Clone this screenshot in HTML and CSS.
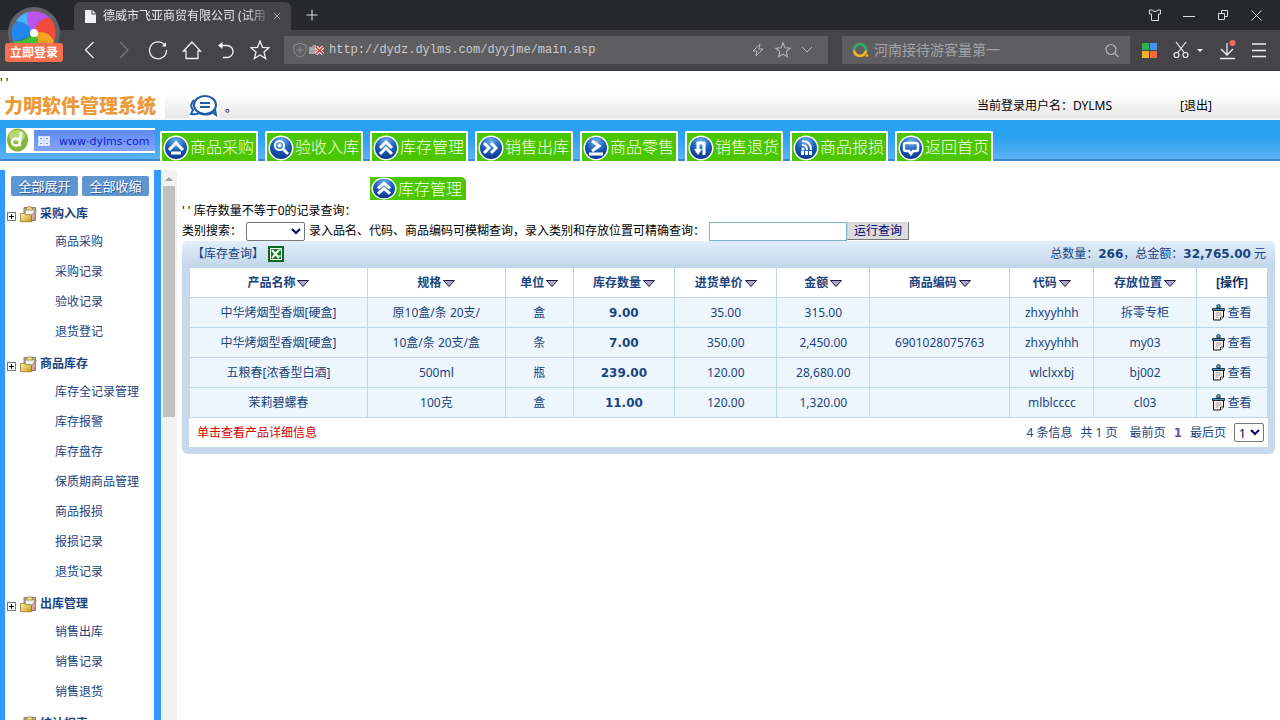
FILE: index.html
```html
<!DOCTYPE html>
<html lang="zh-CN">
<head>
<meta charset="utf-8">
<title>德威市飞亚商贸有限公司</title>
<link rel="stylesheet" href="styles.css">
</head>
<body>
<svg class="defs" width="0" height="0" aria-hidden="true">
  <defs>
    <radialGradient id="ball" cx="50%" cy="20%" r="85%">
      <stop offset="0" stop-color="#6fb6ee"/><stop offset=".5" stop-color="#1d5fb8"/><stop offset="1" stop-color="#0c2f86"/>
    </radialGradient>
    <linearGradient id="folderFill" x1="0" y1="0" x2="1" y2="1">
      <stop offset="0" stop-color="#fff6b8"/><stop offset="1" stop-color="#c99a12"/>
    </linearGradient>
    <linearGradient id="ring" x1="0" y1="0" x2="0" y2="1">
      <stop offset=".5" stop-color="#2fae72"/><stop offset=".6" stop-color="#f2b51f"/>
    </linearGradient>
    <symbol id="disc" viewBox="0 0 26 26">
      <circle cx="13" cy="13" r="12.5" fill="#fff"/><circle cx="13" cy="13" r="11" fill="url(#ball)"/>
    </symbol>
    <symbol id="folder" viewBox="0 0 17 17">
      <path d="M4 1.500h11.500v13H4z" fill="#b9a98a" stroke="#8d8172"/><path d="M6 4h8l-2 9H6z" fill="#f3eff5"/>
      <path d="M7 1.500q2.500-2 5 0l1 2.500H6z" fill="#eedb86" stroke="#8e7a3b" stroke-width=".7"/>
      <path d="M11 10l5-6-1 8-3 3z" fill="#d9a8a6" stroke="#8b6f6c" stroke-width=".6"/>
      <path d="M.5 7.500h4l1 1.200h6v7H.5z" fill="url(#folderFill)" stroke="#8f7523" stroke-width=".8"/>
    </symbol>
    <symbol id="sort" viewBox="0 0 12 7"><path d="M.5.500h11L6 6.500z" fill="#aaa4d4" stroke="#221833"/></symbol>
    <symbol id="clip" viewBox="0 0 13 17">
      <path d="M1.500 6v10h7l3-3V6z" fill="#fdf4ee" stroke="#111"/><path d="M3.500 9h6M3.500 11h6M3.500 13h3" stroke="#777" stroke-width=".7"/>
      <path d="M.5 4.500h12v2H.5z" fill="#3f9bdc" stroke="#111" stroke-width=".8"/><path d="M5 4q-1-3.500 1.500-3.500T8 4z" fill="#55b2e8" stroke="#111" stroke-width=".8"/>
      <path d="M8.500 16v-3h3" fill="#fff" stroke="#111" stroke-width=".8"/>
    </symbol>
    <symbol id="up2" viewBox="0 0 26 26"><use href="#disc"/><path d="M7 13l6-6 6 6M7 19l6-6 6 6" fill="none" stroke="#fff" stroke-width="3"/></symbol>
  </defs>
</svg>

<div class="window">
  <header class="chrome">
    <div class="tabs">
      <div class="tab">
        <svg width="11" height="13" viewBox="0 0 11 13"><path d="M0 0h6.500v4.500H11V13H0z" fill="#f1f1f5"/><path d="M7.500 0L11 3.500H7.500z" fill="#f1f1f5"/></svg>
        <span class="tab-title">德威市飞亚商贸有限公司 (试用</span>
        <button class="plain" aria-label="关闭标签"><svg width="8" height="8" viewBox="0 0 8 8"><path d="M1 1l6 6M7 1L1 7" stroke="#a5a5a9"/></svg></button>
      </div>
      <button class="plain newtab" aria-label="新标签"><svg width="12" height="12" viewBox="0 0 12 12"><path d="M6 .5v11M.5 6h11" stroke="#dcdce0"/></svg></button>
      <div class="winbtns">
        <button class="plain" aria-label="皮肤"><svg width="14" height="14" viewBox="0 0 14 14" fill="none" stroke="#dcdce0"><path d="M1.500 2h3q0 1.500 2.500 1.500T9.500 2h3v4h-2v6.500h-7V6h-2z"/></svg></button>
        <button class="plain" aria-label="最小化"><svg width="14" height="14" viewBox="0 0 14 14"><path d="M1 8.500h12" stroke="#dcdce0"/></svg></button>
        <button class="plain" aria-label="还原"><svg width="14" height="14" viewBox="0 0 14 14" fill="none" stroke="#dcdce0"><path d="M2.500 5.500h6v6h-6zM5.500 5.500v-3h6v6h-3"/></svg></button>
        <button class="plain" aria-label="关闭"><svg width="14" height="14" viewBox="0 0 14 14"><path d="M1.500 2.500l10 10M11.500 2.500l-10 10" stroke="#dcdce0"/></svg></button>
      </div>
    </div>
    <div class="toolbar">
      <div class="navbtns">
        <button class="plain" aria-label="后退"><svg width="20" height="20" viewBox="0 0 20 20" fill="none" stroke="#efeff2" stroke-width="1.300"><path d="M13.500 2L5.500 10l8 8"/></svg></button>
        <button class="plain" aria-label="前进"><svg width="20" height="20" viewBox="0 0 20 20" fill="none" stroke="#77777b" stroke-width="1.300"><path d="M6 2l8 8-8 8"/></svg></button>
        <button class="plain" aria-label="刷新"><svg width="20" height="20" viewBox="0 0 20 20" fill="none" stroke="#efeff2" stroke-width="1.300"><path d="M17 5.500A8.500 8.500 0 1 0 18.500 10"/><path d="M18 2v4.500h-4z" fill="#efeff2" stroke="none"/></svg></button>
        <button class="plain" aria-label="主页"><svg width="20" height="20" viewBox="0 0 20 20" fill="none" stroke="#efeff2" stroke-width="1.300"><path d="M1.500 11l8.500-9 8.500 9H16v7.500H4V11z"/></svg></button>
        <button class="plain" aria-label="撤销"><svg width="20" height="20" viewBox="0 0 20 20" fill="none" stroke="#efeff2" stroke-width="1.300"><path d="M3 5.500h8a6 6 0 0 1 0 12H7"/><path d="M6.500 2v7L2 5.500z" fill="#efeff2" stroke="none"/></svg></button>
        <button class="plain" aria-label="收藏"><svg width="20" height="20" viewBox="0 0 20 20" fill="none" stroke="#efeff2" stroke-width="1.300"><path d="M10 1l2.500 6.300 6.500.5-5 4.200 1.600 6.500L10 15l-5.600 3.500L6 12 1 7.800l6.500-.5z"/></svg></button>
      </div>
      <div class="address">
        <svg width="14" height="16" viewBox="0 0 14 16" fill="none" stroke="#8d8d90"><path d="M7 1q3 2 6 2v5q0 5-6 7-6-2-6-7V3q3 0 6-2zM7 4.500v7M3.500 8h7"/></svg>
        <svg class="noflash" width="18" height="12" viewBox="0 0 18 12"><path d="M0 3h3l1-2h3v9H0z" fill="#a7a7aa"/><path d="M7 3l7 7M14 3l-7 7" stroke="#fff" stroke-width="3.500"/><path d="M7 3l7 7M14 3l-7 7" stroke="#d33b33" stroke-width="1.700"/></svg>
        <input class="url" aria-label="网址" value="http://dydz.dylms.com/dyyjme/main.asp">
        <svg width="14" height="16" viewBox="0 0 14 16" fill="none" stroke="#b5b5b8"><path d="M9 2L2 9h4l-1 5 7-7H8z"/></svg>
        <svg width="16" height="16" viewBox="0 0 20 20" fill="none" stroke="#b5b5b8" stroke-width="1.300"><path d="M10 1l2.500 6.300 6.500.5-5 4.200 1.600 6.500L10 15l-5.600 3.500L6 12 1 7.800l6.500-.5z"/></svg>
        <svg width="12" height="8" viewBox="0 0 12 8" fill="none" stroke="#b5b5b8"><path d="M1 1l5 5 5-5"/></svg>
      </div>
      <div class="search">
        <svg width="18" height="16" viewBox="0 0 18 16"><circle cx="8" cy="8" r="6" fill="none" stroke="url(#ring)" stroke-width="2.600"/><circle cx="15" cy="13.500" r="1.500" fill="#f2a41f"/></svg>
        <input aria-label="搜索" value="河南接待游客量第一">
        <svg width="14" height="15" viewBox="0 0 14 15" fill="none" stroke="#b5b5b8" stroke-width="1.200"><circle cx="6" cy="6.500" r="5"/><path d="M9.500 10l4 4"/></svg>
      </div>
      <div class="tools">
        <button class="plain" aria-label="应用"><svg width="15" height="15" viewBox="0 0 15 15"><path d="M0 0h7v7H0z" fill="#2fb24c"/><path d="M8 0h7v7H8z" fill="#3f95f0"/><path d="M0 8h7v7H0z" fill="#f7b32b"/><path d="M8 8h7v7H8z" fill="#f26a3d"/></svg></button>
        <button class="plain" aria-label="截图"><svg width="30" height="18" viewBox="0 0 30 18" fill="none" stroke="#efeff2" stroke-width="1.200"><path d="M3 1l8.500 11M13 1L4.500 12"/><circle cx="3.500" cy="14" r="2.500"/><circle cx="12.500" cy="14" r="2.500"/><path d="M24 8h6l-3 3z" fill="#fff" stroke="none"/></svg></button>
        <button class="plain" aria-label="下载"><svg width="17" height="20" viewBox="0 0 17 20" fill="none" stroke="#efeff2" stroke-width="1.300"><path d="M8 3v12M2 9l6 6 6-6M1 18.500h15"/><circle cx="13.500" cy="3" r="3" fill="#ee6a60" stroke="none"/></svg></button>
        <button class="plain" aria-label="菜单"><svg width="14" height="16" viewBox="0 0 14 16"><path d="M0 2h14M0 8.500h14M0 14.500h14" stroke="#efeff2" stroke-width="1.300"/></svg></button>
      </div>
    </div>
    <button class="login">
      <svg width="52" height="52" viewBox="-26 -26 52 52"><circle r="26" fill="#626266"/>
        <path d="M0 0Q-4-10-18-12A22 22 0 0 0-21 8Q-10 8 0 0z" fill="#2386f0"/><path d="M0 0Q-4-10-18-12A22 22 0 0 1-6-21Q-8-8 0 0z" fill="#45b6f5"/><path d="M0 0Q-10-10-6-21A22 22 0 0 1 16-15Q4-14 0 0z" fill="#b955ea"/><path d="M0 0Q3-15 16-15A22 22 0 0 1 20 8Q14-4 0 0z" fill="#f24a3c"/><path d="M0 0Q14-4 20 8A22 22 0 0 1 2 22Q8 10 0 0z" fill="#f9a21f"/><path d="M0 0Q8 10 2 22A22 22 0 0 1-21 8Q-10 10 0 0z" fill="#3fc23a"/>
        <circle r="4" fill="#fff"/></svg>
      <span>立即登录</span>
    </button>
  </header>

  <div class="page">
    <div class="stray">' '</div>
    <div class="brand">
      <h1>力明软件管理系统</h1>
      <svg class="chat" width="30" height="24" viewBox="0 0 30 24" fill="none" stroke="#1c5aa6" stroke-width="2"><ellipse cx="16" cy="11" rx="11" ry="9" fill="#fff"/><path d="M5 6Q0 11 4 16l-2 4q5 1 8-1 7 3 13 0"/><path d="M23 18l4 3-1-6"/><path d="M11 9h10M11 13h10"/></svg>
      <span class="dot">。</span>
      <span class="user">当前登录用户名：DYLMS</span>
      <a href="#">[退出]</a>
    </div>
    <nav class="band">
      <a class="site" href="#">
        <svg width="28" height="25" viewBox="0 0 28 25"><path d="M0 0h28v25H0z" fill="#fff"/><ellipse cx="11.500" cy="12" rx="10.500" ry="11.500" fill="#87b63d"/><ellipse cx="11" cy="8" rx="8" ry="6" fill="#b5d77a"/><ellipse cx="10" cy="14" rx="4" ry="3.500" fill="none" stroke="#fff" stroke-width="2.500"/><path d="M15 4l-1.500 14" stroke="#fff" stroke-width="2.500"/></svg>
        <span class="site-url"><svg width="12" height="10" viewBox="0 0 12 10" fill="none" stroke="#fff" stroke-width="1.500"><path d="M1 1h4v3H1zM7 1h4v3H7zM1 6h4v3H1zM7 6h4v3H7z"/></svg><span>www·dylms·com</span></span>
      </a>
      <a class="pill" href="#"><svg width="26" height="26" viewBox="0 0 26 26"><use href="#disc"/><path d="M6 15l7-7 7 7M8 18h10" fill="none" stroke="#fff" stroke-width="3"/></svg>商品采购</a>
      <a class="pill" href="#"><svg width="26" height="26" viewBox="0 0 26 26"><use href="#disc"/><g fill="none" stroke="#fff" stroke-width="2"><circle cx="11.500" cy="10.500" r="4.500"/><path d="M9.500 10.500h4M11.500 8.500v4"/><path d="M15 14l5 5" stroke-width="3"/></g></svg>验收入库</a>
      <a class="pill" href="#"><svg width="26" height="26"><use href="#up2"/></svg>库存管理</a>
      <a class="pill" href="#"><svg width="26" height="26" viewBox="0 0 26 26"><use href="#disc"/><path d="M6 8l5 5-5 5M13 8l5 5-5 5" fill="none" stroke="#fff" stroke-width="3"/></svg>销售出库</a>
      <a class="pill" href="#"><svg width="26" height="26" viewBox="0 0 26 26"><use href="#disc"/><path d="M9 6l7 5-7 5M6 19h14" fill="none" stroke="#fff" stroke-width="3"/></svg>商品零售</a>
      <a class="pill" href="#"><svg width="26" height="26" viewBox="0 0 26 26"><use href="#disc"/><path d="M10 17V8h6v12" fill="none" stroke="#fff" stroke-width="3"/><path d="M6 14h8l-4 6z" fill="#fff"/></svg>销售退货</a>
      <a class="pill" href="#"><svg width="26" height="26" viewBox="0 0 26 26"><use href="#disc"/><g fill="none" stroke="#fff" stroke-width="2"><path d="M9 6q9 0 9 9M9 10q5 0 5 5"/><path d="M8 18h11" stroke-width="4" stroke-dasharray="3 1"/></g><circle cx="10" cy="14" r="1.500" fill="#fff"/></svg>商品报损</a>
      <a class="pill" href="#"><svg width="26" height="26" viewBox="0 0 26 26"><use href="#disc"/><path d="M8 8h10q2 0 2 2v4q0 2-2 2h-3l-2 3-2-3H8q-2 0-2-2v-4q0-2 2-2z" fill="none" stroke="#fff" stroke-width="2.500"/></svg>返回首页</a>
    </nav>

    <div class="body">
      <aside class="side">
        <div class="side-btns"><button>全部展开</button><button>全部收缩</button></div>
        <section>
          <h2><i class="plus"></i><svg width="17" height="17"><use href="#folder"/></svg>采购入库</h2>
          <a href="#">商品采购</a><a href="#">采购记录</a><a href="#">验收记录</a><a href="#">退货登记</a>
        </section>
        <section>
          <h2><i class="plus"></i><svg width="17" height="17"><use href="#folder"/></svg>商品库存</h2>
          <a href="#">库存全记录管理</a><a href="#">库存报警</a><a href="#">库存盘存</a><a href="#">保质期商品管理</a><a href="#">商品报损</a><a href="#">报损记录</a><a href="#">退货记录</a>
        </section>
        <section>
          <h2><i class="plus"></i><svg width="17" height="17"><use href="#folder"/></svg>出库管理</h2>
          <a href="#">销售出库</a><a href="#">销售记录</a><a href="#">销售退货</a>
        </section>
        <section>
          <h2><i class="plus"></i><svg width="17" height="17"><use href="#folder"/></svg>统计报表</h2>
        </section>
      </aside>
      <div class="scroll"><svg width="8" height="4" viewBox="0 0 8 4"><path d="M0 4l4-4 4 4z" fill="#a0a0a0"/></svg><div class="thumb"></div></div>

      <main>
        <div class="current"><svg width="26" height="23" viewBox="0 0 26 26" preserveAspectRatio="none"><use href="#up2"/></svg>库存管理</div>
        <p class="note">' ' 库存数量不等于0的记录查询：</p>
        <form class="query">
          <label for="cat">类别搜索：</label>
          <select id="cat"><option></option></select>
          <label for="kw">录入品名、代码、商品编码可模糊查询，录入类别和存放位置可精确查询：</label>
          <input id="kw" type="text"><button type="button">运行查询</button>
        </form>
        <div class="panel">
          <div class="panel-head">
            <span>【库存查询】</span>
            <svg width="16" height="16" viewBox="0 0 16 16"><path d="M0 0h16v16H0z" fill="#0b6b1c"/><path d="M2 2h12v12H2z" fill="#fff"/><path d="M3 3h10v10H3z" fill="#0e7a22"/><path d="M4 4l7 8M11 4l-7 8" stroke="#fff" stroke-width="2"/><path d="M9 10h4M11 4l2 0" stroke="#fff"/></svg>
            <span class="sum">总数量：<b>266</b>，总金额：<b>32,765.00</b> 元</span>
          </div>
          <table>
            <colgroup><col class="name"><col class="spec"><col class="unit"><col class="count"><col class="price"><col class="amount"><col class="barcode"><col class="code"><col class="place"><col class="action"></colgroup>
            <thead><tr>
              <th>产品名称<svg width="12" height="7"><use href="#sort"/></svg></th><th>规格<svg width="12" height="7"><use href="#sort"/></svg></th><th>单位<svg width="12" height="7"><use href="#sort"/></svg></th><th>库存数量<svg width="12" height="7"><use href="#sort"/></svg></th><th>进货单价<svg width="12" height="7"><use href="#sort"/></svg></th><th>金额<svg width="12" height="7"><use href="#sort"/></svg></th><th>商品编码<svg width="12" height="7"><use href="#sort"/></svg></th><th>代码<svg width="12" height="7"><use href="#sort"/></svg></th><th>存放位置<svg width="12" height="7"><use href="#sort"/></svg></th><th class="op">[操作]</th>
            </tr></thead>
            <tbody>
              <tr><td>中华烤烟型香烟[硬盒]</td><td>原10盒/条 20支/</td><td>盒</td><td><b>9.00</b></td><td>35.00</td><td>315.00</td><td></td><td>zhxyyhhh</td><td>拆零专柜</td><td><a href="#"><svg width="13" height="17"><use href="#clip"/></svg>查看</a></td></tr>
              <tr><td>中华烤烟型香烟[硬盒]</td><td>10盒/条 20支/盒</td><td>条</td><td><b>7.00</b></td><td>350.00</td><td>2,450.00</td><td>6901028075763</td><td>zhxyyhhh</td><td>my03</td><td><a href="#"><svg width="13" height="17"><use href="#clip"/></svg>查看</a></td></tr>
              <tr><td>五粮春[浓香型白酒]</td><td>500ml</td><td>瓶</td><td><b>239.00</b></td><td>120.00</td><td>28,680.00</td><td></td><td>wlclxxbj</td><td>bj002</td><td><a href="#"><svg width="13" height="17"><use href="#clip"/></svg>查看</a></td></tr>
              <tr><td>茉莉碧螺春</td><td>100克</td><td>盒</td><td><b>11.00</b></td><td>120.00</td><td>1,320.00</td><td></td><td>mlblcccc</td><td>cl03</td><td><a href="#"><svg width="13" height="17"><use href="#clip"/></svg>查看</a></td></tr>
            </tbody>
          </table>
          <div class="panel-foot">
            <span class="hint">单击查看产品详细信息</span>
            <span>4 条信息</span><span>共 1 页</span>
            <a class="first" href="#">最前页</a><b>1</b><a href="#">最后页</a>
            <select aria-label="页码"><option>1</option></select>
          </div>
        </div>
      </main>
    </div>
  </div>
</div>
</body>
</html>
```

FILE: styles.css
```css
* { box-sizing: border-box; }
body {
  margin: 0;
  font: 12px/20px "Noto Sans", "Noto Sans CJK SC", sans-serif;
  color: #000;
  background: #fff;
}
button, input, select { font: inherit; }
a { color: inherit; text-decoration: none; }
h1, h2, p { margin: 0; }
svg { flex: none; display: block; }
.defs { position: absolute; }
.plain { border: 0; padding: 0; background: none; display: flex; align-items: center; }
.window { height: 100vh; overflow: hidden; display: flex; flex-direction: column; }

/* browser frame */
.chrome { position: relative; background: #454549; flex: none; border-bottom: 1px solid #39393d; }
.tabs { display: flex; height: 30px; align-items: center; background: #272730; padding-left: 74px; }
.tab {
  display: flex; align-items: center; gap: 7px; width: 217px; height: 28px; align-self: flex-end;
  padding: 0 10px 0 11px; background: #454549; border-radius: 6px 6px 0 0; color: #e6e6ea;
}
.tab-title {
  flex: 1; white-space: nowrap;
  mask-image: linear-gradient(90deg, #000 88%, #0003);
}
.newtab { margin-left: 15px; }
.winbtns { display: flex; gap: 20px; margin-left: auto; padding-right: 16px; }
.toolbar { display: flex; align-items: center; height: 40px; padding-left: 80px; }
.navbtns { display: flex; gap: 14px; margin-right: 14px; }
.address, .search { display: flex; align-items: center; height: 28px; background: #5e5e61; min-width: 0; }
.address { flex: 1 1 544px; padding: 0 15px 0 9px; gap: 10px; }
.search { flex: 1 1 288px; margin-left: 14px; padding: 0 11px 0 10px; gap: 4px; }
.address input, .search input {
  flex: 1; min-width: 0; border: 0; padding: 0; background: none; outline: 0; color: #c9c9cc;
}
.address .url { font: 12px/20px "Liberation Mono", monospace; }
.address .noflash { margin: 0 -8px 0 -8px; }
.search input { font-size: 14px; color: #a3a3a6; }
.tools { display: flex; align-items: center; gap: 16px; padding: 0 14px 0 12px; }
.login {
  position: absolute; left: 5px; top: 7px; width: 58px; border: 0; padding: 0; background: none;
  display: flex; flex-direction: column; align-items: center;
}
.login span {
  margin-top: -16px; width: 100%; border-radius: 3px; background: #f8704f; color: #fff;
  font-size: 12px; font-weight: 700; line-height: 19px; z-index: 1;
}

/* header of the site */
.page { flex: 1; min-height: 0; display: flex; flex-direction: column; }
.stray { height: 23px; line-height: 23px; }
.brand {
  display: flex; align-items: center; height: 26px; padding-right: 68px;
  background: linear-gradient(#fff, #e6e6e6); border-bottom: 2px solid #f4f4f4;
}
.brand h1 { width: 165px; padding-left: 4px; background: #fff; color: #eb9a3c; font-size: 19px; line-height: 24px; font-weight: 900; white-space: nowrap; }
.brand .chat { margin: 0 6px 0 24px; background: #fff; }
.brand .dot { padding-top: 4px; }
.brand .user { margin-left: auto; margin-right: 68px; }
.band {
  display: flex; align-items: flex-end; gap: 7px; height: 41px; flex: none;
  background: linear-gradient(#2aa1f1 40%, #5bb1f6 94%, #3b86cc 95%);
}
.site { display: flex; align-items: center; width: 149px; height: 25px; margin: 0 -2px 8px 6px; background: #fff; }
.site-url {
  flex: 1; height: 21px; display: flex; align-items: center; gap: 9px; padding-left: 4px;
  background: linear-gradient(#5c8bf2, #84a4fa); color: #1420c8;
  font: 11px/20px "DejaVu Sans", sans-serif; white-space: nowrap;
}
.site-url span { padding-top: 2px; }
.pill, .current {
  display: flex; align-items: center; background: #4cc600; color: #f2ffe6;
  font-size: 16px; font-weight: 300; line-height: 24px; white-space: nowrap;
}
.pill { width: 98px; height: 30px; border: 2px solid #fff; border-bottom: 0; gap: 1px; padding-left: 1px; border-radius: 2px 2px 0 0; }
.pill svg { margin-top: 2px; }

/* left menu */
.body { flex: 1; min-height: 0; display: flex; overflow: hidden; padding-top: 9px; }
.side {
  flex: none; width: 161px; border: solid #3399ff; border-width: 0 7px 0 5px;
  padding: 6px 5px 0 2px; color: #1a4480;
}
.side-btns { display: flex; gap: 4px; padding-left: 4px; }
.side-btns button {
  flex: 1; height: 20px; border: 0; border-radius: 2px; padding: 0; background: #5f96cf; color: #fff;
  font-size: 13px; line-height: 20px; white-space: nowrap; text-shadow: 1px 1px #2d5f9e;
}
.side section { padding-top: 4px; }
.side h2 { display: flex; align-items: center; height: 26px; padding-top: 2px; font-size: 12px; font-weight: 700; }
.side h2 svg { margin: 0 3px 0 4px; }
.plus {
  width: 9px; height: 9px; margin-top: 4px; border: 1px solid #777;
  background: linear-gradient(#000, #000) center / 5px 1px no-repeat, linear-gradient(#000, #000) center / 1px 5px no-repeat, #fff;
}
.side section a { display: block; padding: 2px 0 0 48px; line-height: 28px; }
.scroll { flex: none; width: 16px; display: flex; flex-direction: column; align-items: center; gap: 5px; padding-top: 7px; background: #f1f1f1; }
.thumb { width: 12px; height: 231px; background: #c1c1c1; }

/* stock list */
main { flex: 1; min-width: 0; padding: 7px 5px; }
.current { width: 96px; height: 23px; margin-left: 188px; gap: 1px; padding-left: 1px; border-radius: 0 5px 0 0; }
.note { line-height: 20px; padding-top: 1px; }
.query { display: flex; align-items: center; height: 20px; white-space: nowrap; }
.query select { width: 59px; height: 19px; margin: 0 4px; padding: 0; border: 1px solid #777; border-radius: 2px; background: #fff; color: #00006a; }
.query input { width: 138px; height: 19px; margin-left: 4px; border: 1px solid #7eb0cf; padding: 0 2px; }
.query button { width: 62px; height: 18px; padding: 0; border: 1px solid #d0d0d0; border-right-color: #777; border-bottom-color: #777; background: #dcdcdf; color: #00006a; line-height: 16px; }
.panel { background: #c6d9ed; border-radius: 6px; padding: 0 7px 7px; color: #1a4480; }
.panel-head {
  display: flex; align-items: center; height: 26px; margin: 0 -7px; padding: 0 9px 0 10px;
  background: linear-gradient(#e2eefa, #c2d6eb); border-radius: 6px 6px 0 0;
}
.panel-head svg { margin-left: 4px; }
.sum { margin-left: auto; white-space: pre; }
b { font: 700 12px/20px "DejaVu Sans", sans-serif; }
table { width: 100%; table-layout: fixed; border-collapse: collapse; background: #edf6fd; }
.name { width: 16.5%; } .spec { width: 12.8%; } .unit { width: 6.3%; } .count { width: 9.4%; } .price { width: 9.5%; }
.amount { width: 8.6%; } .barcode { width: 13%; } .code { width: 7.8%; } .place { width: 9.5%; } .action { width: 6.6%; }
th, td { height: 30px; padding: 0; border: 1px solid #c0d6ea; text-align: center; white-space: nowrap; }
th { background: #fff; font-weight: 700; }
th svg { display: inline-block; margin-left: 2px; }
.op { color: #062f62; }
td a { display: flex; align-items: center; justify-content: center; gap: 2px; }
.panel-foot { display: flex; align-items: center; height: 29px; padding: 0 4px 0 8px; background: #fff; gap: 8px; }
.hint { margin-right: auto; color: #d40000; }
.first { margin-left: 4px; }
.panel-foot b { color: #6a4fb0; }
.panel-foot select { width: 30px; height: 19px; padding: 0; border: 1px solid #777; border-radius: 2px; background: #fff; color: #00006a; }
```
